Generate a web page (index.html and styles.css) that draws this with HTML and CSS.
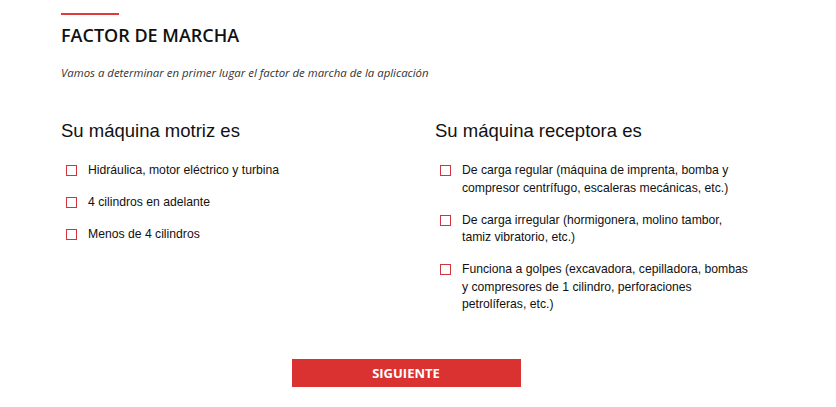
FILE: index.html
```html
<!DOCTYPE html>
<html lang="es">
<head>
  <meta charset="UTF-8" />
  <title>Factor de marcha</title>
  <link rel="stylesheet" href="styles.css">
</head>
<body>
  <div class="page">
    <div class="rule"></div>
    <h1 class="title">FACTOR DE MARCHA</h1>
    <p class="intro">Vamos a determinar en primer lugar el factor de marcha de la aplicación</p>

    <div class="columns">
      <div class="column">
        <h2>Su máquina motriz es</h2>
        <ul class="options">
          <li><span class="box"></span><span>Hidráulica, motor eléctrico y turbina</span></li>
          <li><span class="box"></span><span>4 cilindros en adelante</span></li>
          <li><span class="box"></span><span>Menos de 4 cilindros</span></li>
        </ul>
      </div>
      <div class="column">
        <h2>Su máquina receptora es</h2>
        <ul class="options">
          <li><span class="box"></span><span>De carga regular (máquina de imprenta, bomba y compresor centrífugo, escaleras mecánicas, etc.)</span></li>
          <li><span class="box"></span><span>De carga irregular (hormigonera, molino tambor, tamiz vibratorio, etc.)</span></li>
          <li><span class="box"></span><span>Funciona a golpes (excavadora, cepilladora, bombas y compresores de 1 cilindro, perforaciones petrolíferas, etc.)</span></li>
        </ul>
      </div>
    </div>

    <div class="actions">
      <button class="next">SIGUIENTE</button>
    </div>
  </div>
</body>
</html>
```

FILE: styles.css
```css
body {
  margin: 0;
  background: #fff;
  color: #111;
  font-family: "Liberation Sans", Arial, sans-serif;
}
.page {
  padding: 13px 0 0 61px;
}
.rule {
  width: 58px;
  height: 2px;
  background: #e0393b;
}
.title {
  margin: 8px 0 0;
  font-family: "Open Sans", sans-serif;
  font-weight: 600;
  font-size: 18px;
  line-height: 24px;
  color: #111;
}
.intro {
  margin: 18px 0 0;
  font-family: "Open Sans", sans-serif;
  font-style: italic;
  font-size: 11.4px;
  line-height: 16px;
  color: #333;
}
.columns {
  display: grid;
  grid-template-columns: 374px 330px;
  margin-top: 38px;
}
.column h2 {
  margin: 0;
  font-weight: 400;
  font-size: 18.5px;
  line-height: 24px;
  color: #111;
}
.options {
  list-style: none;
  margin: 19px 0 0;
  padding: 0 0 0 5px;
  font-size: 12.2px;
  line-height: 17.5px;
}
.options li {
  display: flex;
  gap: 11px;
  margin-bottom: 14.5px;
}
.options li span:last-child {
  max-width: 292px;
}
.box {
  flex: none;
  width: 9px;
  height: 9px;
  margin-top: 3px;
  border: 1px solid #d2343f;
}
.actions {
  display: flex;
  justify-content: center;
  padding-right: 85px;
  margin-top: 31px;
}
.next {
  width: 229px;
  height: 28px;
  border: none;
  background: #da3131;
  color: #fff;
  font-family: "Open Sans", sans-serif;
  font-weight: 700;
  font-size: 13px;
  cursor: pointer;
}
```
